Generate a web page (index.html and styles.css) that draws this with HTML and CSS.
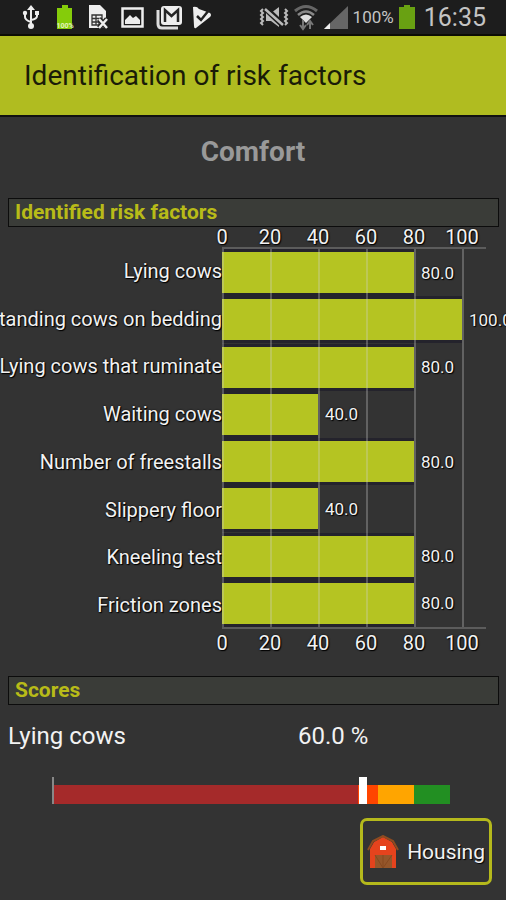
FILE: index.html
```html
<!DOCTYPE html>
<html lang="en">
<head>
<meta charset="utf-8">
<meta name="viewport" content="width=device-width, initial-scale=1">
<title>Identification of risk factors</title>
<link rel="stylesheet" href="styles.css">
</head>
<body>
<div class="status">
  <div class="status-left">
    <svg width="18" height="26" viewBox="0 0 18 26" fill="none" stroke="#eee" stroke-width="2"><path d="M9 4v18M3 9v4q0 3 6 5M15 9v3q0 3-6 4"/><g fill="#eee" stroke="none"><path d="M5 6l4-5 4 5zM13 7h4v4h-4z"/><circle cx="3" cy="9" r="2.2"/><circle cx="9" cy="22" r="3"/></g></svg>
    <svg width="18" height="26" viewBox="0 0 18 26"><path d="M6 1h6v3h4v21H1V4h5z" fill="#85cc0a"/><text x="9" y="24" class="tiny">100%</text></svg>
    <svg width="21" height="26" viewBox="0 0 21 26"><path d="M1 1h11l6 6v17H1z" fill="#eee"/><path d="M4 11h10v10H4zM4 14.500h10M4 18h10M8 11v10M11 14v7" fill="none" stroke="#333" stroke-width="1.300"/><path d="M11 15l8 9M19 15l-8 9" stroke="#222" stroke-width="5"/><path d="M11 15l8 9M19 15l-8 9" stroke="#eee" stroke-width="2.500"/></svg>
    <svg width="23" height="26" viewBox="0 0 23 26"><path d="M1.500 4.500h20v18h-20z" fill="#1d1d1d" stroke="#eee" stroke-width="2.500"/><path d="M4 20v-4l5-5 3 3 3-2 4 4v4z" fill="#eee"/></svg>
    <svg width="27" height="26" viewBox="0 0 27 26"><path d="M2 6v14q0 4 4 4h16" fill="none" stroke="#ddd" stroke-width="3"/><rect x="5" y="2" width="21" height="19" rx="3" fill="#eee"/><path d="M9 18V6l6.500 6L22 6v12" fill="none" stroke="#252525" stroke-width="2.500"/></svg>
    <svg width="21" height="26" viewBox="0 0 21 26"><path d="M2 3q4-1 6 2l11 4q2 2 0 4L5 24q-2 1-2-2z" fill="#eee"/><path d="M6 12l4 4 8-10" fill="none" stroke="#222" stroke-width="2.500"/></svg>
  </div>
  <div class="status-right">
    <svg width="30" height="26" viewBox="0 0 30 26" fill="none" stroke="#bbb"><path d="M7 9h5l8-6v20l-8-6H7z" fill="#bbb" stroke="none"/><path d="M6 4l18 17" stroke="#1d1d1d" stroke-width="6"/><path d="M6 5l18 16" stroke-width="2.500"/><path d="M4 5l-2 2 2 2-2 2 2 2-2 2 2 2-2 2 2 2M26 5l2 2-2 2 2 2-2 2 2 2-2 2 2 2-2 2" stroke-width="2"/></svg>
    <svg width="26" height="28" viewBox="0 0 26 28" fill="none"><path d="M2 8q11-9 22 0" stroke="#666" stroke-width="3"/><path d="M5 12q8-7 16 0" stroke="#888" stroke-width="2.500"/><path d="M7 14q6-5 12 0l-6 6z" fill="#ddd"/><path d="M10 17v9M7 22l3 4 3-4M17 26v-8M14 22l3-4 3 4" stroke="#777" stroke-width="2"/></svg>
    <svg width="26" height="26" viewBox="0 0 26 26"><path d="M1 25L25 2v23z" fill="#666"/><path d="M1 25l6-6v6z" fill="#eee"/></svg>
    <span class="percent">100%</span>
    <svg width="18" height="26" viewBox="0 0 18 26"><path d="M6 1h6v2h5v22H1V3h5z" fill="#69a112"/></svg>
    <time class="clock">16:35</time>
  </div>
</div>
<header class="title-bar"><h1>Identification of risk factors</h1></header>
<main>
  <h2 class="topic">Comfort</h2>
  <h3 class="section">Identified risk factors</h3>
  <div class="chart">
    <div class="ticks"><span>0</span><span>20</span><span>40</span><span>60</span><span>80</span><span>100</span></div>
    <div class="labels">
      <span>Lying cows</span><span>Standing cows on bedding</span><span>Lying cows that ruminate</span><span>Waiting cows</span><span>Number of freestalls</span><span>Slippery floor</span><span>Kneeling test</span><span>Friction zones</span>
    </div>
    <div class="plot">
      <div class="row"><i class="bar" style="--value:80"></i><span>80.0</span></div>
      <div class="row"><i class="bar" style="--value:100"></i><span>100.0</span></div>
      <div class="row"><i class="bar" style="--value:80"></i><span>80.0</span></div>
      <div class="row"><i class="bar" style="--value:40"></i><span>40.0</span></div>
      <div class="row"><i class="bar" style="--value:80"></i><span>80.0</span></div>
      <div class="row"><i class="bar" style="--value:40"></i><span>40.0</span></div>
      <div class="row"><i class="bar" style="--value:80"></i><span>80.0</span></div>
      <div class="row"><i class="bar" style="--value:80"></i><span>80.0</span></div>
      <div class="grid-lines"><i></i><i></i><i></i><i></i><i></i><i></i></div>
    </div>
    <div class="ticks"><span>0</span><span>20</span><span>40</span><span>60</span><span>80</span><span>100</span></div>
  </div>
  <h3 class="section">Scores</h3>
  <div class="score"><span>Lying cows</span><span>60.0 %</span></div>
  <div class="gauge">
    <i class="bad"></i><i class="poor"></i><i class="fair"></i><i class="good"></i>
    <i class="marker"></i>
  </div>
  <div class="actions">
    <button type="button" class="housing">
      <svg width="32" height="34" viewBox="0 0 32 34"><path d="M3 14l4-7 9-5 9 5 4 7v19H3z" fill="#e5431d"/><path d="M1 15l5-9 10-5 10 5 5 9" fill="none" stroke="#8f4b20" stroke-width="2"/><rect x="13" y="11" width="6" height="4" fill="#fff"/><path d="M8 20h17v13H8z" fill="#95562a"/><path d="M8 20l8 13 9-13M16 20v13" fill="none" stroke="#87491f"/></svg>
      <span>Housing</span>
    </button>
  </div>
</main>
</body>
</html>
```
FILE: styles.css
```css
* { box-sizing: border-box; }
body {
  margin: 0;
  min-height: 100vh;
  overflow-x: hidden;
  background: #333;
  color: #f2f2f2;
  font-family: Roboto, "Liberation Sans", sans-serif;
}
h1, h2, h3 { margin: 0; }
svg { display: block; flex: none; }

.status {
  display: flex;
  justify-content: space-between;
  height: 36px;
  padding: 0 20px 0 22px;
  background: #1d1d1d;
  border-bottom: 2px solid #0c0c04;
}
.status-left, .status-right { display: flex; align-items: center; }
.status-left { gap: 12px; }
.status-left svg:nth-child(2) { margin: 0 2px 0 4px; }
.status-left svg:nth-child(5) { margin-right: -4px; }
.status-right { gap: 4px; color: #c4c4c4; }
.tiny {
  font-size: 7px;
  font-weight: 700;
  fill: #e4f4c0;
  text-anchor: middle;
}
.percent { font-size: 17px; }
.clock { margin-left: 4px; font-size: 25px; }

.title-bar {
  padding: 22px 24px 21px;
  background: #b0bc20;
  border-bottom: 2px solid #111;
}
.title-bar h1 {
  color: #1a1c08;
  font-size: 28px;
  line-height: 36px;
  font-weight: 400;
}

.topic {
  padding: 17px 0 28px;
  color: #999;
  font-size: 28px;
  line-height: 36px;
  text-align: center;
}
.section {
  margin: 0 7px 0 8px;
  padding: 0 6px;
  background: #3a3c38;
  border: 1px solid #0c0c0c;
  color: #b8bb18;
  font-size: 21px;
  line-height: 27px;
}

.chart {
  display: grid;
  grid-template-columns: 198px repeat(12, minmax(0, 1fr));
  padding-right: 20px;
  margin-bottom: 23px;
  text-shadow: 0 0 2px #000, 1px 1px 1px #000;
}
.ticks {
  grid-column: 2 / -1;
  display: grid;
  grid-template-columns: repeat(6, 1fr);
  font-size: 20px;
  line-height: 20px;
  text-align: center;
}
.ticks:last-child { padding-top: 4px; }
.labels {
  grid-column: 1 / 3;
  display: grid;
  grid-template-columns: minmax(0, 1fr);
  grid-auto-rows: 1fr;
  font-size: 20px;
}
.labels span {
  display: flex;
  align-items: center;
  justify-content: flex-end;
  white-space: nowrap;
}
.plot {
  grid-column: 3 / -1;
  position: relative;
  display: grid;
  grid-auto-rows: 1fr;
  height: 382px;
  border-top: 2px solid #5c5c5c;
  border-bottom: 2px solid #5c5c5c;
}
.row { display: flex; align-items: center; gap: 7px; font-size: 17px; }
.bar {
  flex: none;
  width: calc(var(--value) / 110 * 100%);
  height: 47px;
  background: #b5c422;
  border: solid #24232c;
  border-width: 3px 0;
}
.grid-lines {
  position: absolute;
  inset: 0;
  display: grid;
  grid-template-columns: repeat(5, 2fr) 1fr;
}
.grid-lines i { border-left: 2px solid rgba(210, 210, 210, .3); }

.score {
  display: grid;
  grid-template-columns: 290px 1fr;
  padding: 16px 8px 0;
  font-size: 24px;
  line-height: 30px;
}
.gauge {
  position: relative;
  display: flex;
  height: 27px;
  margin: 26px 56px 0 52px;
  padding-top: 8px;
  border-left: 2px solid #888;
}
.bad { flex: 304; background: #a52a2a; }
.poor { flex: 20; background: #ff4500; }
.fair { flex: 36; background: #ffa500; }
.good { flex: 36; background: #228f22; }
.marker {
  position: absolute;
  top: 0;
  bottom: 0;
  left: 77%;
  width: 8px;
  background: #fff;
}

.actions {
  display: flex;
  justify-content: flex-end;
  padding: 14px 14px;
}
.housing {
  display: flex;
  align-items: center;
  gap: 8px;
  height: 67px;
  padding: 0 4px;
  background: #333;
  border: 3px solid #b5b91c;
  border-radius: 7px;
  color: #f2f2f2;
  font: 21px Roboto, "Liberation Sans", sans-serif;
  text-shadow: 1px 1px 1px #000;
}
```
